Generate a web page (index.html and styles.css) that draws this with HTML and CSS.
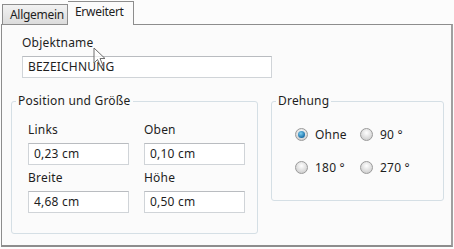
FILE: index.html
```html
<!DOCTYPE html>
<html lang="de">
<head>
    <meta charset="UTF-8">
    <title>Eigenschaften</title>
    <link rel="stylesheet" href="styles.css">
</head>
<body>

<div class="tabs">
    <div class="tab">Allgemein</div>
    <div class="tab active">Erweitert</div>
</div>

<div class="panel">
    <div class="name-row">
        <label class="caption">Objektname</label>
        <div class="field wide">BEZEICHNUNG</div>
        <svg class="cursor" width="14" height="22" viewBox="0 0 14 22">
            <path d="M1 1 L1 16 L4.5 12.5 L7.5 19.5 L10 18.5 L7 11.5 L12 11.5 Z" fill="#fff" fill-opacity="0.7" stroke="#6e6e6e" stroke-width="1"/>
        </svg>
    </div>

    <div class="groups">
        <fieldset class="group pos">
            <legend>Position und Größe</legend>
            <div class="grid">
                <div class="cell">
                    <label class="caption">Links</label>
                    <div class="field">0,23 cm</div>
                </div>
                <div class="cell">
                    <label class="caption">Oben</label>
                    <div class="field">0,10 cm</div>
                </div>
                <div class="cell">
                    <label class="caption">Breite</label>
                    <div class="field">4,68 cm</div>
                </div>
                <div class="cell">
                    <label class="caption">Höhe</label>
                    <div class="field">0,50 cm</div>
                </div>
            </div>
        </fieldset>

        <fieldset class="group rot">
            <legend>Drehung</legend>
            <div class="radios">
                <div class="radio"><span class="dot checked"></span>Ohne</div>
                <div class="radio"><span class="dot"></span>90 °</div>
                <div class="radio"><span class="dot"></span>180 °</div>
                <div class="radio"><span class="dot"></span>270 °</div>
            </div>
        </fieldset>
    </div>
</div>

</body>
</html>
```

FILE: styles.css
```css
body {
    margin: 0;
    padding: 0;
    width: 454px;
    height: 249px;
    background-color: #fcfcfc;
    font-family: "Segoe UI", "Noto Sans", sans-serif;
    font-size: 12px;
    letter-spacing: 0.2px;
    color: #1e1e1e;
    overflow: hidden;
}

.tabs {
    display: flex;
    align-items: flex-end;
    height: 24px;
    padding-left: 2px;
}

.tab {
    height: 20px;
    width: 66px;
    padding-left: 7px;
    line-height: 19px;
    border: 1px solid #8d8d8d;
    border-bottom: none;
    background: linear-gradient(#f2f2f2, #dcdcdc);
    box-sizing: border-box;
    letter-spacing: -0.3px;
    white-space: nowrap;
}

.tab.active {
    height: 24px;
    width: 66px;
    line-height: 20px;
    background: #fbfbfb;
    border-left: none;
    margin-bottom: -1px;
    position: relative;
    z-index: 1;
}

.panel {
    margin: 0 1px;
    height: 223px;
    border: 1px solid #8d8d8d;
    border-bottom-width: 2px;
    border-right-width: 2px;
    border-right-color: #a0a0a0;
    background-color: #fbfbfb;
    padding: 9px 0 0 20px;
    box-sizing: border-box;
}

.caption {
    display: block;
    height: 18px;
    line-height: 18px;
    margin-bottom: 4px;
}

.field {
    height: 22px;
    line-height: 20px;
    border: 1px solid #d0d4d8;
    border-top-color: #b9bcc0;
    background: #fff;
    padding: 0 5px;
    box-sizing: border-box;
    width: 101px;
}

.field.wide {
    width: 250px;
}

.name-row {
    position: relative;
}

.cursor {
    position: absolute;
    left: 71px;
    top: 13px;
}

.groups {
    display: flex;
    align-items: flex-start;
    margin-left: -11px;
    margin-top: 16px;
}

.group {
    margin: 0;
    padding: 0;
    border: 1px solid #d5dfe5;
    border-radius: 3px;
    box-sizing: border-box;
}

.group legend {
    padding: 0 2px;
    margin-left: 4px;
    line-height: 14px;
}

.pos {
    width: 247px;
    height: 140px;
}

.grid {
    display: grid;
    grid-template-columns: 116px 101px;
    row-gap: 4px;
    padding: 13px 0 0 16px;
}

.rot {
    width: 173px;
    height: 107px;
    margin-left: 13px;
}

.radios {
    display: grid;
    grid-template-columns: 65px 70px;
    row-gap: 15px;
    padding: 17px 0 0 23px;
}

.radio {
    display: flex;
    align-items: center;
    gap: 7px;
    height: 18px;
}

.dot {
    width: 11px;
    height: 11px;
    border-radius: 50%;
    border: 1px solid #9a9a9a;
    background: radial-gradient(circle at 50% 35%, #ffffff, #d2d2d2 75%);
    position: relative;
}

.dot.checked::after {
    content: "";
    position: absolute;
    left: 2px;
    top: 2px;
    width: 7px;
    height: 7px;
    border-radius: 50%;
    background: radial-gradient(circle at 40% 35%, #7fd0f0, #1a6fa8 70%);
}
```
